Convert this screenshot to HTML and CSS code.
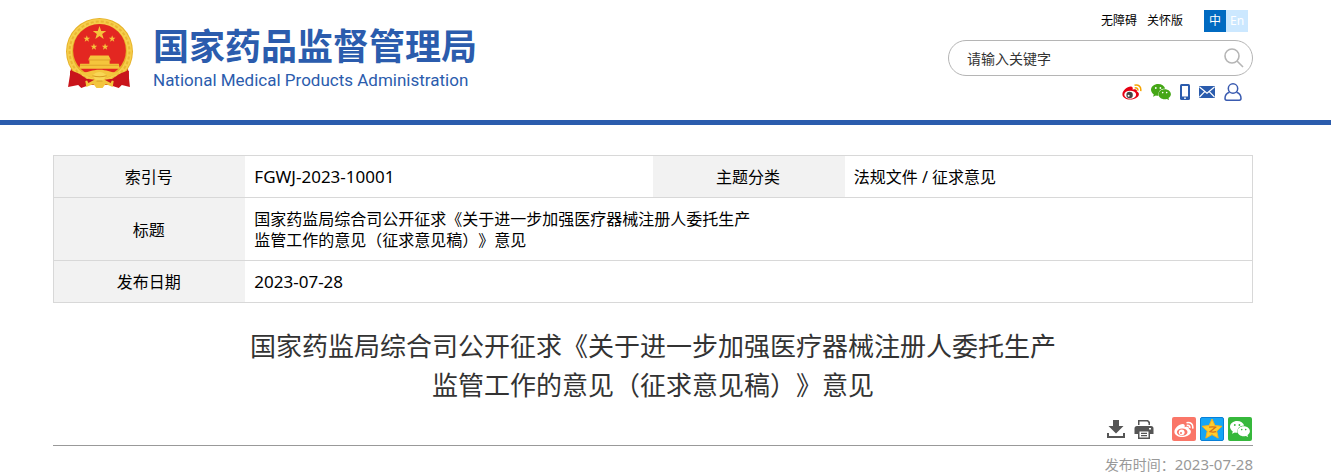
FILE: index.html
```html
<!DOCTYPE html>
<html lang="zh-CN">
<head>
    <meta charset="UTF-8">
    <meta name="viewport" content="width=device-width, initial-scale=1.0">
    <title>国家药品监督管理局</title>
    <link rel="stylesheet" href="styles.css">
</head>
<body>
    <!-- 公用图形 -->
    <svg width="0" height="0" class="defs" aria-hidden="true">
        <symbol id="star" viewBox="-10 -10 20 20">
            <path d="M0-10 2.4-3.2 9.5-3.1 3.8 1.2 5.9 8.1 0 4-5.9 8.1-3.8 1.2-9.5-3.1-2.4-3.2z"/>
        </symbol>
        <symbol id="wechat" viewBox="0 0 20 16">
            <path fill="currentColor" d="M7.2 0C3.2 0 0 2.6 0 5.8c0 1.9 1.1 3.5 2.8 4.6L2 12.8l2.900-1.400c1 .3 1.800.4 2.600.3-.9-4 2.300-7.200 6.700-7.200C13.400 1.900 10.600 0 7.200 0z"/>
            <path fill="currentColor" d="M13.700 5.200c-3.500 0-6.200 2.300-6.200 5s2.700 5 6.200 5c.8 0 1.500-.1 2.100-.3l2.300 1.100-.6-2c1.500-.9 2.400-2.300 2.400-3.800 0-2.700-2.700-5-6.200-5z"/>
            <g class="eye"><circle cx="4.800" cy="4" r=".9"/><circle cx="9.400" cy="4" r=".9"/><circle cx="11.700" cy="8.600" r=".8"/><circle cx="15.700" cy="8.600" r=".8"/></g>
        </symbol>
    </svg>

    <header class="header">
        <div class="container header-inner">
            <a href="#" class="logo">
                <svg class="emblem" viewBox="0 0 66 70" aria-hidden="true">
                    <path fill="#c9141b" d="M5 49 2 68l10-2 3 3 8-3h20l9 3 3-3 8 2-2-19z"/>
                    <path fill="#e5372b" d="m8 51-2 13 7-5zm50 0 2 13-7-5z"/>
                    <circle cx="33" cy="33" r="33" fill="#e6b128"/>
                    <circle cx="33" cy="33" r="29.500" fill="none" stroke="#f6ce4b" stroke-width="5"/>
                    <circle cx="33" cy="33" r="29.500" fill="none" stroke="#eab733" stroke-width="2" stroke-dasharray="3 2"/>
                    <circle cx="33" cy="32" r="26" fill="#e32721"/>
                    <g fill="#f5c43c">
                        <use href="#star" x="26" y="8" width="14" height="14"/>
                        <use href="#star" x="17" y="17" width="7" height="7"/>
                        <use href="#star" x="42" y="17" width="7" height="7"/>
                        <use href="#star" x="24" y="25" width="7" height="7"/>
                        <use href="#star" x="35" y="25" width="7" height="7"/>
                        <path d="M24 37h18l2 4H22zM23 41h20v4H23zM14 45h38l1 5H13z"/>
                    </g>
                    <path fill="#dfa428" d="M22 41h22v1H22zM14 46h38v1H14z"/>
                    <path fill="#c9141b" d="M4 52c8 1 13 6 18 9l-6 7-3-4-9 3zM62 52c-8 1-13 6-18 9l6 7 3-4 9 3z"/>
                    <path fill="#f3c53d" d="M13 53c8 2 11-2 20-2s12 4 20 2c-5 6-11 3-14 7l8 2-1 6-7-3-3 4h-6l-3-4-7 3-1-6 8-2c-3-4-9-1-14-7z"/>
                    <path fill="#c9141b" d="m20 60 8 1-6 3zm26 0-8 1 6 3z"/>
                    <path fill="#f8d656" d="M26 57c3-5 11-5 14 0l-4 5h-6z"/>
                    <path fill="none" stroke="#d69b20" d="M26 57c4 1 10 1 14 0M30 62h6"/>
                </svg>
                <span class="logo-text">
                    <span class="logo-cn">国家药品监督管理局</span>
                    <span class="logo-en">National Medical Products Administration</span>
                </span>
            </a>

            <div class="header-right">
                <nav class="top-links">
                    <a href="#">无障碍</a>
                    <a href="#">关怀版</a>
                    <div class="lang">
                        <a href="#" class="lang-cn">中</a><a href="#" class="lang-en">En</a>
                    </div>
                </nav>
                <form class="search">
                    <input type="text" placeholder="请输入关键字" aria-label="请输入关键字">
                    <button type="button" aria-label="搜索">
                        <svg width="20" height="20" viewBox="0 0 20 20" fill="none" stroke="#b5b5b5" stroke-width="1.600"><circle cx="8" cy="8" r="7"/><path d="m13 13 6 6"/></svg>
                    </button>
                </form>
                <div class="social">
                    <a href="#" aria-label="微博">
                        <svg width="20" height="16" viewBox="0 0 20 16">
                            <path fill="#e60012" d="M8.600 2.500c-3.500.2-8.200 4-8.200 7.700C.4 13.400 4 15.500 8.100 15.500c5.200 0 8.800-2.700 8.800-5.300 0-1.500-1.200-2.200-2.100-2.600.6-2-1-3-4.200-1.800.5-1.700.1-3.400-2-3.300z"/>
                            <ellipse cx="8.200" cy="10.700" rx="5.900" ry="4" fill="#fff"/>
                            <circle cx="7.600" cy="11" r="3.200" fill="#444"/><circle cx="6.600" cy="11.800" r="1" fill="#fff"/>
                            <path fill="none" stroke="#f5a400" stroke-width="1.500" d="M12.500 1.200c4-1 7 1.500 6.200 6M12.700 4c2.200-.5 3.500.6 3.100 2.700"/>
                        </svg>
                    </a>
                    <a href="#" aria-label="微信" class="green"><svg width="20" height="16"><use href="#wechat"/></svg></a>
                    <a href="#" aria-label="手机">
                        <svg width="10" height="16" viewBox="0 0 10 16"><rect width="10" height="16" rx="1.500" fill="#2b5cad"/><path fill="#fff" d="M2 2h6v10.500H2z"/><circle cx="5" cy="14.200" r=".9" fill="#fff"/></svg>
                    </a>
                    <a href="#" aria-label="邮箱">
                        <svg width="16" height="12" viewBox="0 0 16 12"><rect width="16" height="12" rx="1" fill="#2b5cad"/><path fill="none" stroke="#fff" stroke-width="1.200" d="m.5 1 7.500 6.200L15.500 1M.5 11l5-5.200M15.500 11l-5-5.200"/></svg>
                    </a>
                    <a href="#" aria-label="用户">
                        <svg width="18" height="18" viewBox="0 0 18 18" fill="none" stroke="#3a5bb0" stroke-width="1.500"><circle cx="9" cy="5.500" r="4.700"/><path d="M5.500 9.300C2.500 10.300 1 12.800 1 15.300c0 1.300.6 1.900 1.600 1.900h12.800c1 0 1.600-.6 1.600-1.900 0-2.500-1.500-5-4.500-6"/></svg>
                    </a>
                </div>
            </div>
        </div>
    </header>

    <main class="main">
        <div class="container">
            <table class="info">
                <tr>
                    <th>索引号</th>
                    <td class="latin">FGWJ-2023-10001</td>
                    <th>主题分类</th>
                    <td>法规文件 / 征求意见</td>
                </tr>
                <tr>
                    <th>标题</th>
                    <td colspan="3">国家药监局综合司公开征求《关于进一步加强医疗器械注册人委托生产<br>监管工作的意见（征求意见稿）》意见</td>
                </tr>
                <tr>
                    <th>发布日期</th>
                    <td colspan="3" class="latin">2023-07-28</td>
                </tr>
            </table>

            <h1>国家药监局综合司公开征求《关于进一步加强医疗器械注册人委托生产<br>监管工作的意见（征求意见稿）》意见</h1>

            <div class="actions">
                <button type="button" aria-label="下载">
                    <svg width="20" height="20" viewBox="0 0 20 20" fill="#555"><path d="M7 1h6v6h4.500L10 14.500 2.500 7H7z"/><path d="M1 14h2v3h14v-3h2v5H1z"/></svg>
                </button>
                <button type="button" aria-label="打印" class="print">
                    <svg width="20" height="20" viewBox="0 0 20 20"><path fill="#555" d="M4 1h10l2 2v3H4zM3 7h14a2.500 2.500 0 0 1 2.500 2.500V15H16v5H4v-5H.5V9.500A2.500 2.500 0 0 1 3 7z"/><path fill="#fff" d="M5.500 2.500h7.800L14.500 4v2.200h-9zM5.500 12.500h9v6h-9zM15 9h2v1.500h-2z"/><path stroke="#555" stroke-width="1.300" d="M7 14.300h6M7 16.700h6"/></svg>
                </button>
                <a href="#" aria-label="分享到微博" class="share share-weibo">
                    <svg width="20" height="17" viewBox="0 0 20 16">
                        <path fill="#fff" d="M8.600 2.500c-3.500.2-8.200 4-8.200 7.700C.4 13.400 4 15.500 8.100 15.500c5.200 0 8.800-2.700 8.800-5.300 0-1.500-1.200-2.200-2.100-2.600.6-2-1-3-4.200-1.800.5-1.700.1-3.400-2-3.300z"/>
                        <ellipse cx="8.200" cy="10.600" rx="5.300" ry="3.600" fill="#fa7668"/>
                        <circle cx="7.700" cy="10.800" r="2.900" fill="#fff"/><circle cx="7" cy="11.500" r="1" fill="#fa7668"/>
                        <path fill="none" stroke="#fff" stroke-width="1.500" d="M12.500 1.200c4-1 7 1.500 6.200 6M12.700 4c2.200-.5 3.500.6 3.100 2.700"/>
                    </svg>
                </a>
                <a href="#" aria-label="分享到QQ空间" class="share share-qzone">
                    <svg width="22" height="22" viewBox="0 0 22 22"><path fill="#ffce2e" stroke="#f9b21d" stroke-linejoin="round" d="m11 1 2.900 6.500 7 .8-5.200 4.800 1.500 7L11 16.600l-6.200 3.500 1.500-7L1.100 8.300l7-.8z"/><path fill="none" stroke="#d6701c" stroke-width="1.300" d="M8 9.200c2.500-.5 4.500-.5 6.500 0l-5.500 4.500c2 .5 4 .5 6 0"/></svg>
                </a>
                <a href="#" aria-label="分享到微信" class="share share-wechat"><svg width="20" height="16"><use href="#wechat"/></svg></a>
            </div>

            <p class="pub-time">发布时间：<span>2023-07-28</span></p>
        </div>
    </main>
</body>
</html>
```

FILE: styles.css
```css
* {
    box-sizing: border-box;
}

body {
    margin: 0;
    background-color: #fff;
    color: #000;
    font-family: "Noto Sans", "Noto Sans CJK SC", sans-serif;
    font-size: 16px;
    text-spacing-trim: space-all;
}

a {
    color: inherit;
    text-decoration: none;
}

svg {
    display: block;
}

button {
    padding: 0;
    border: 0;
    background: none;
    cursor: pointer;
}

.defs {
    position: absolute;
}

.header,
.main {
    padding-right: 25px;
}

.container {
    max-width: 1200px;
    margin: 0 auto;
}

/* 页头 */
.header {
    border-bottom: 5px solid #2b5cad;
}

.header-inner {
    display: flex;
    justify-content: space-between;
    height: 120px;
    padding-top: 10px;
}

.logo {
    display: flex;
    align-items: flex-start;
    gap: 20px;
    padding: 8px 0 0 13px;
    color: #2b5cad;
}

.emblem {
    width: 67px;
    height: 71px;
}

.logo-text {
    display: flex;
    flex-direction: column;
}

.logo-cn {
    font-family: "Noto Sans CJK SC", sans-serif;
    font-size: 36px;
    font-weight: bold;
    line-height: 52px;
}

.logo-en {
    font-family: Roboto, sans-serif;
    font-size: 17px;
    line-height: 20px;
}

.header-right {
    width: 305px;
}

.top-links {
    display: flex;
    justify-content: flex-end;
    gap: 10px;
    padding-right: 5px;
    font-size: 12px;
    line-height: 22px;
}

.lang {
    display: flex;
    margin-left: 11px;
    color: #fff;
    text-align: center;
}

.lang a {
    width: 22px;
}

.lang-cn {
    background-color: #006ac1;
}

.lang-en {
    background-color: #cce8ff;
}

.search {
    display: flex;
    align-items: center;
    height: 36px;
    margin-top: 8px;
    padding: 0 8px 0 18px;
    border: 1px solid #b5b5b5;
    border-radius: 18px;
}

.search input {
    flex: 1;
    min-width: 0;
    padding: 0;
    border: 0;
    outline: 0;
    background: none;
    font-family: inherit;
    font-size: 14px;
}

.search input::placeholder {
    color: #333;
    opacity: 1;
}

.social {
    display: flex;
    justify-content: flex-end;
    align-items: center;
    gap: 9px;
    height: 18px;
    margin-top: 7px;
    padding-right: 11px;
}

.green {
    color: #45a716;
}

.eye {
    fill: var(--eye, #fff);
}

/* 信息表 */
.main {
    padding-top: 30px;
}

.info {
    width: 100%;
    border: 1px solid #d8d8d8;
    border-collapse: collapse;
    table-layout: fixed;
    line-height: 21px;
}

.info tr {
    border-bottom: 1px solid #d8d8d8;
}

.info th {
    width: 16%;
    padding: 11px 2px 9px 0;
    background-color: #f2f2f2;
    font-weight: normal;
    text-align: center;
}

.info td {
    padding: 11px 9px 9px;
}

.info .latin {
    padding: 10px 9px;
    font-size: 17px;
}

h1 {
    margin: 24px 0 0;
    color: #333;
    font-size: 26px;
    font-weight: normal;
    line-height: 39px;
    text-align: center;
}

.actions {
    display: flex;
    justify-content: flex-end;
    align-items: center;
    gap: 4px;
    margin-top: 12px;
    padding: 0 1px 4px 0;
    border-bottom: 1px solid #999;
}

.print {
    margin: 0 14px 0 4px;
}

.share {
    display: flex;
    align-items: center;
    justify-content: center;
    width: 24px;
    height: 24px;
    border-radius: 2px;
    color: #fff;
}

.share-weibo {
    background-color: #fa7668;
}

.share-qzone {
    border: 1px solid #0780d8;
    background-color: #16a5f5;
}

.share-wechat {
    --eye: #36b83c;
    background-color: #36b83c;
}

.pub-time {
    margin: 8px 0 0;
    color: #999;
    font-size: 14px;
    line-height: 20px;
    text-align: right;
}

.pub-time span {
    font-size: 15px;
}
```
